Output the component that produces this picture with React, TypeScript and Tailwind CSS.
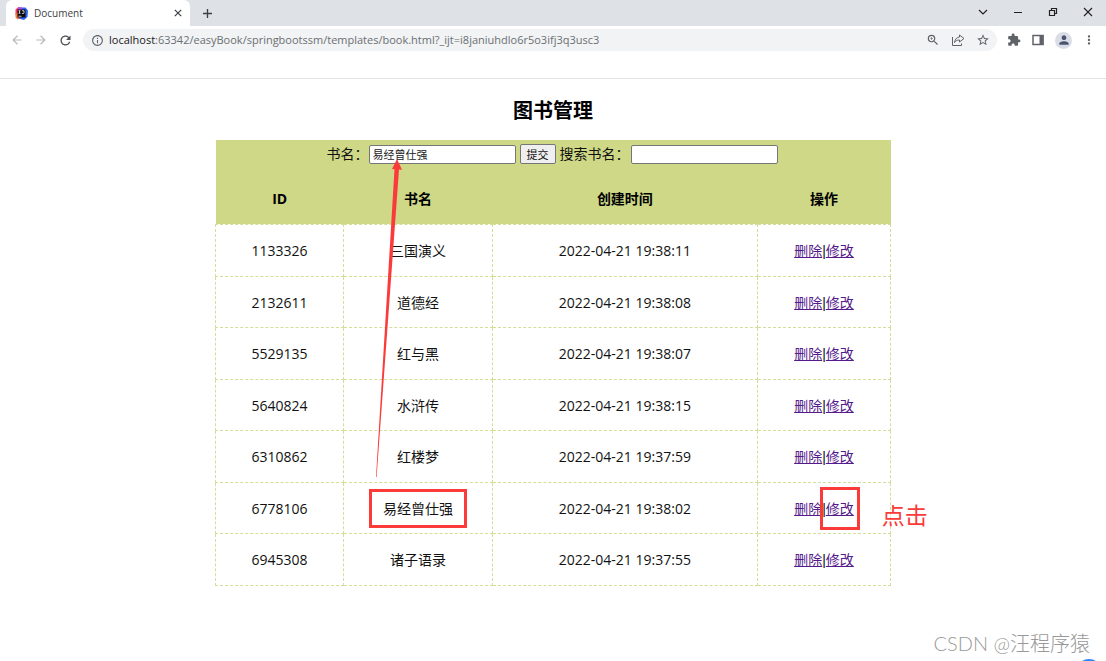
import { useState } from "react";
import { MdArrowBack, MdArrowForward, MdExtension, MdMoreVert, MdOutlineInfo, MdPerson, MdRefresh, MdStarBorder, MdZoomIn } from "react-icons/md";

interface Book {
  id: number;
  name: string;
  createdAt: string;
}

const BOOKS: Book[] = [
  { id: 1133326, name: "三国演义", createdAt: "2022-04-21 19:38:11" },
  { id: 2132611, name: "道德经", createdAt: "2022-04-21 19:38:08" },
  { id: 5529135, name: "红与黑", createdAt: "2022-04-21 19:38:07" },
  { id: 5640824, name: "水浒传", createdAt: "2022-04-21 19:38:15" },
  { id: 6310862, name: "红楼梦", createdAt: "2022-04-21 19:37:59" },
  { id: 6778106, name: "易经曾仕强", createdAt: "2022-04-21 19:38:02" },
  { id: 6945308, name: "诸子语录", createdAt: "2022-04-21 19:37:55" },
];

const EDITED_ID = 6778106;
const CELL = "border border-dashed border-[#d5dd98] p-0 pt-0.5 text-center align-middle";
const FIELD = "h-[19px] w-[147px] rounded-xs border border-[#767676] bg-white px-[3px] text-[11px] leading-4 text-[#222]";

function IdeaLogo() {
  return (
    <svg viewBox="0 0 26 26" className="size-[13px]" aria-hidden="true">
      <path d="M1 5 7 0l8 3-2 22-7-3-5-7z" fill="#fc3559" />
      <path d="M1 14l5-3 3 12-4 2-4-4z" fill="#f97a3d" />
      <path d="M12 1h9l5 6-1 13-7 6-10-3z" fill="#2f65f6" />
      <path d="M7 0l8 1-2 6-8-1z" fill="#b34be0" />
      <rect x="5" y="5" width="16" height="16" fill="#0a0a0a" />
      <path d="M7 7.5h4M9 7.5v5M7 12.5h4M14 7.5h4v4q0 1.500-2 1.500h-2M7 18.500h6" stroke="#fff" strokeWidth="1.500" fill="none" />
    </svg>
  );
}

function TabStrip() {
  return (
    <div className="flex h-[26px] items-stretch bg-[#dee1e6] text-[#3c4043]">
      <div className="ml-1.5 flex w-[184px] items-center gap-1.5 rounded-t-md bg-white pl-[9px] pr-1.5">
        <IdeaLogo />
        <span className="flex-1 text-[10px]">Document</span>
        <button type="button" aria-label="Close tab" className="grid size-3 place-items-center">
          <svg viewBox="0 0 10 10" className="size-[8px]" stroke="currentColor" strokeWidth="1.500"><path d="M1 1l8 8M9 1L1 9" /></svg>
        </button>
      </div>
      <button type="button" aria-label="New tab" className="ml-3 grid w-[11px] place-items-center">
        <svg viewBox="0 0 10 10" className="size-[9px]" stroke="currentColor" strokeWidth="1.500"><path d="M5 0v10M0 5h10" /></svg>
      </button>
      <div className="ml-auto mr-[13px] flex items-center gap-[25px] pb-[3px] text-[#222]">
        <button type="button" aria-label="Search tabs">
          <svg viewBox="0 0 10 10" className="size-[10px]" fill="none" stroke="currentColor" strokeWidth="1.200"><path d="M1 3l4 4 4-4" /></svg>
        </button>
        <button type="button" aria-label="Minimize">
          <svg viewBox="0 0 10 10" className="size-[10px]" stroke="currentColor"><path d="M1 5.500h8" /></svg>
        </button>
        <button type="button" aria-label="Restore">
          <svg viewBox="0 0 10 10" className="size-[10px]" fill="none" stroke="currentColor" strokeWidth="1.200"><path d="M1.500 3.500h5v5h-5zM3.500 3.500v-2h5v5h-2" /></svg>
        </button>
        <button type="button" aria-label="Close">
          <svg viewBox="0 0 10 10" className="size-[10px]" stroke="currentColor" strokeWidth="1.100"><path d="M1 1l8 8M9 1L1 9" /></svg>
        </button>
      </div>
    </div>
  );
}

function Toolbar() {
  return (
    <div className="flex h-7 items-center pr-2.5 text-[#5f6368]">
      <div className="flex w-[83px] items-center gap-2.5 pl-2.5">
        <button type="button" aria-label="Back" className="text-[#b6b9bc]"><MdArrowBack size={14} /></button>
        <button type="button" aria-label="Forward" className="text-[#b6b9bc]"><MdArrowForward size={14} /></button>
        <button type="button" aria-label="Reload" className="text-[#4b4f53]"><MdRefresh size={15} /></button>
      </div>
      <div className="flex h-[22px] flex-1 items-center rounded-full bg-[#f1f3f4] pl-2 pr-[7px]">
        <MdOutlineInfo size={13} />
        <span className="ml-[5px] flex-1 text-[11px] text-[#6b6f73]">
          <span className="text-[#202124]">localhost</span>:63342/easyBook/springbootssm/templates/book.html?_ijt=i8janiuhdlo6r5o3ifj3q3usc3
        </span>
        <div className="flex items-center gap-[11px]">
          <button type="button" aria-label="Zoom"><MdZoomIn size={14} /></button>
          <button type="button" aria-label="Share">
            <svg viewBox="0 0 14 14" className="size-[14px]" fill="none" stroke="currentColor" strokeLinejoin="round">
              <path d="M1.500 4v8.500h9v-2M8.500 2l4.500 3.500L8.500 9V7C6 7 4.500 7.800 3.500 9.500 4 6 6 4.200 8.500 4z" />
            </svg>
          </button>
          <button type="button" aria-label="Bookmark"><MdStarBorder size={14} /></button>
        </div>
      </div>
      <div className="ml-2.5 flex items-center gap-2.5">
        <button type="button" aria-label="Extensions"><MdExtension size={14} /></button>
        <button type="button" aria-label="Side panel">
          <svg viewBox="0 0 12 12" className="mx-px size-3" fill="none" stroke="currentColor" strokeWidth="1.500"><path d="M1 1.500h10v9H1z" /><path d="M7.500 1h4v10h-4z" fill="currentColor" stroke="none" /></svg>
        </button>
        <button type="button" aria-label="Profile" className="grid size-[17px] place-items-center rounded-full bg-[#dadce6] text-[#4a5470]"><MdPerson size={14} /></button>
        <button type="button" aria-label="Menu"><MdMoreVert size={14} /></button>
      </div>
    </div>
  );
}

export default function App() {
  const [name, setName] = useState("易经曾仕强");
  const [keyword, setKeyword] = useState("");

  return (
    <div className="relative flex min-h-screen flex-col overflow-hidden bg-white font-['Open_Sans','Noto_Sans_CJK_SC',sans-serif] text-[#111]">
      <header className="border-b border-[#e2e3e5] pb-6">
        <TabStrip />
        <Toolbar />
      </header>

      <main className="flex-1 pt-[18px]">
        <h1 className="text-center text-[20px] font-bold leading-7 text-black">图书管理</h1>

        <div className="relative mx-auto mt-[15px] w-full max-w-[676px]">
          <table className="w-full table-fixed border-collapse text-[14px] leading-5">
            <colgroup>
              <col className="w-[19%]" />
              <col className="w-[22%]" />
              <col />
              <col className="w-[133px]" />
            </colgroup>
            <thead className="bg-[#ced887]">
              <tr>
                <td colSpan={4} className="h-[34px] p-0 align-top">
                  <form className="flex h-7 items-center justify-center pr-0.5" onSubmit={(e) => e.preventDefault()}>
                    <label htmlFor="name">书名：</label>
                    <input id="name" className={FIELD} value={name} onChange={(e) => setName(e.target.value)} />
                    <button type="submit" className="mx-1 h-5 w-9 rounded-xs border border-[#767676] bg-[#efefef] pt-px text-[11px] leading-4">提交</button>
                    <label htmlFor="keyword" className="mr-px">搜索书名：</label>
                    <input id="keyword" className={FIELD} value={keyword} onChange={(e) => setKeyword(e.target.value)} />
                  </form>
                </td>
              </tr>
              <tr className="h-[50px] text-black">
                {["ID", "书名", "创建时间", "操作"].map((header) => <th key={header} className="p-0 font-bold">{header}</th>)}
              </tr>
            </thead>
            <tbody>
              {BOOKS.map((book) => (
                <tr key={book.id} className="odd:h-[52px] even:h-[51px]">
                  <td className={CELL}>{book.id}</td>
                  <td className={CELL}>
                    <span className="relative">
                      {book.name}
                      {book.id === EDITED_ID && <span className="absolute -inset-x-3.5 -inset-y-2.5 border-3 border-[#fb3a3a]" />}
                    </span>
                  </td>
                  <td className={CELL}>{book.createdAt}</td>
                  <td className={CELL}>
                    <a href="#delete" className="text-[#551a8b] underline">删除</a>
                    <span className="font-['Liberation_Sans',sans-serif]">|</span>
                    <span className="relative">
                      <a href="#edit" className="text-[#551a8b] underline">修改</a>
                      {book.id === EDITED_ID && (
                        <>
                          <span className="absolute -inset-x-1.5 -inset-y-3 border-3 border-[#fb3a3a]" />
                          <span className="absolute left-14 top-0 whitespace-nowrap text-[23px] leading-8 text-[#fb3a3a]">点击</span>
                        </>
                      )}
                    </span>
                  </td>
                </tr>
              ))}
            </tbody>
          </table>

          {/* arrow from the edited row up to the name field */}
          <svg viewBox="0 0 200 340" className="pointer-events-none absolute left-0 top-0 h-[340px] w-[200px]" aria-hidden="true">
            <path d="M182 19l-5 10 2.500.2L161 337h.6L184 29.500l3 .2z" fill="#fb3a3a" />
          </svg>
        </div>
      </main>

      <p className="absolute bottom-1 right-4 text-[20px] leading-7 text-[#999] font-['Lato','Noto_Sans_CJK_SC',sans-serif] font-light">CSDN @汪程序猿</p>
      <span className="absolute -bottom-6 right-1 size-[26px] rounded-full bg-[#2f86f6]" />
    </div>
  );
}
